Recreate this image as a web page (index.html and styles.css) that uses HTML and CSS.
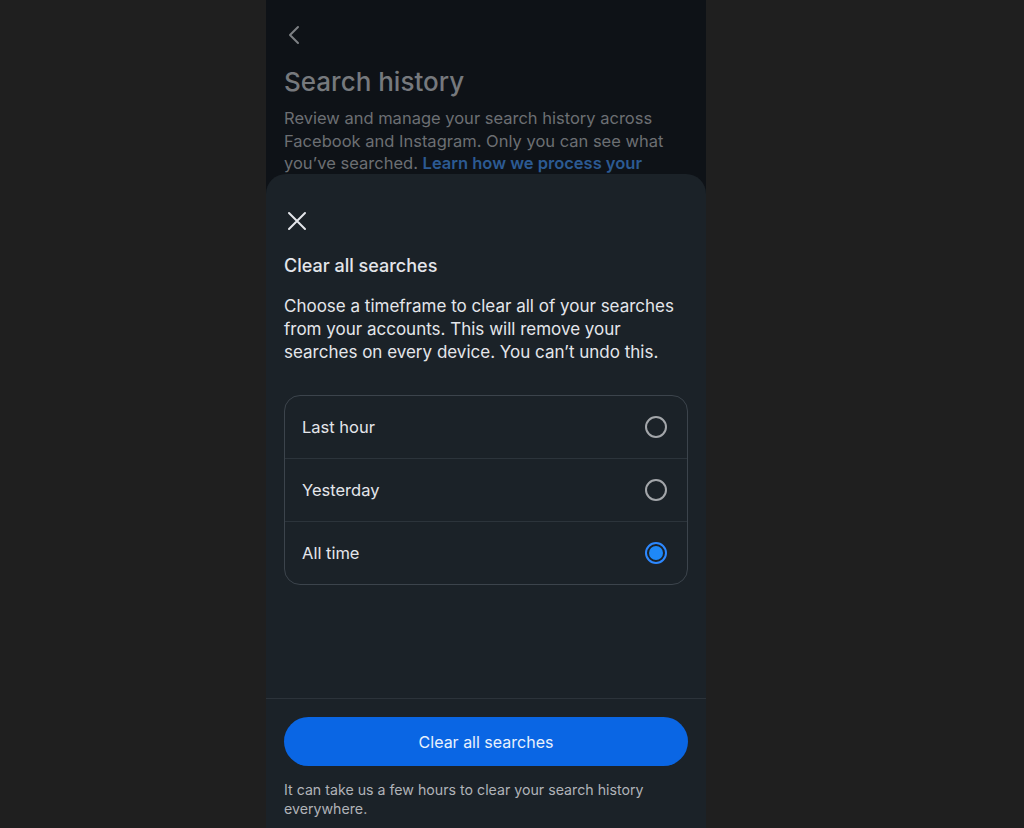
FILE: index.html
```html
<!DOCTYPE html>
<html lang="en">
<head>
<meta charset="utf-8">
<title>Clear all searches</title>
<link rel="stylesheet" href="styles.css">
</head>
<body>
<div class="phone">
  <div class="behind">
    <svg class="back" width="14" height="20" viewBox="0 0 14 20"><path d="M11 2 L3 10 L11 18" fill="none" stroke="#7d8084" stroke-width="2" stroke-linecap="round" stroke-linejoin="round"/></svg>
    <h1 class="title">Search history</h1>
    <p class="intro">Review and manage your search history across Facebook and Instagram. Only you can see what you’ve searched. <span class="link">Learn how we process your</span></p>
  </div>
  <div class="sheet">
    <div class="sheet-body">
      <svg class="close" width="20" height="20" viewBox="0 0 20 20"><path d="M2 2 L18 18 M18 2 L2 18" fill="none" stroke="#e4e6eb" stroke-width="2" stroke-linecap="round"/></svg>
      <h2 class="heading">Clear all searches</h2>
      <p class="desc">Choose a timeframe to clear all of your searches from your accounts. This will remove your searches on every device. You can’t undo this.</p>
      <div class="options">
        <div class="option"><span>Last hour</span><span class="radio"></span></div>
        <div class="option"><span>Yesterday</span><span class="radio"></span></div>
        <div class="option"><span>All time</span><span class="radio selected"></span></div>
      </div>
    </div>
    <div class="sheet-footer">
      <button class="primary">Clear all searches</button>
      <p class="note">It can take us a few hours to clear your search history everywhere.</p>
    </div>
  </div>
</div>
</body>
</html>
```

FILE: styles.css
```css
html, body {
  margin: 0;
  padding: 0;
}
body {
  background: #1f1f1f;
  font-family: Inter, "Liberation Sans", sans-serif;
  height: 828px;
  overflow: hidden;
}
.phone {
  width: 440px;
  height: 828px;
  margin-left: 266px;
  background: #0e1217;
  display: flex;
  flex-direction: column;
}
.behind {
  height: 174px;
  overflow: hidden;
  padding: 0 18px;
  box-sizing: border-box;
  flex: none;
}
.back {
  display: block;
  margin: 25px 0 0 3px;
}
.title {
  margin: 22px 0 0;
  font-size: 26px;
  line-height: 30px;
  font-weight: 500;
  color: #76797d;
}
.intro {
  margin: 10px 0 0;
  font-size: 16.5px;
  line-height: 22.5px;
  color: #6c6f73;
}
.link {
  color: #2c5a92;
  font-weight: 600;
}
.sheet {
  flex: 1;
  background: #1b2228;
  border-radius: 20px 20px 0 0;
  display: flex;
  flex-direction: column;
}
.sheet-body {
  flex: 1;
  padding: 0 18px;
}
.close {
  display: block;
  margin: 37px 0 0 3px;
}
.heading {
  margin: 23px 0 0;
  font-size: 18px;
  line-height: 24px;
  font-weight: 500;
  color: #e4e6eb;
}
.desc {
  margin: 17px 0 0;
  font-size: 17px;
  line-height: 23px;
  color: #e4e6eb;
}
.options {
  margin-top: 31px;
  border: 1px solid #3c444c;
  border-radius: 16px;
}
.option {
  height: 62px;
  padding: 0 20px 0 17px;
  display: flex;
  align-items: center;
  justify-content: space-between;
  font-size: 16.5px;
  color: #e4e6eb;
}
.option + .option {
  border-top: 1px solid #2c343b;
}
.radio {
  width: 18px;
  height: 18px;
  border: 2px solid #a3a6aa;
  border-radius: 50%;
  box-sizing: content-box;
  position: relative;
}
.radio.selected {
  border-color: #2d88ff;
}
.radio.selected::after {
  content: "";
  position: absolute;
  left: 2px;
  top: 2px;
  width: 14px;
  height: 14px;
  border-radius: 50%;
  background: #1e88f7;
}
.sheet-footer {
  flex: none;
  height: 130px;
  box-sizing: border-box;
  border-top: 1px solid #2c333a;
  padding: 18px 18px 0;
}
.primary {
  display: block;
  width: 100%;
  height: 49px;
  border: 0;
  border-radius: 25px;
  background: #0a66e4;
  color: #e9f1fc;
  font-family: Inter, "Liberation Sans", sans-serif;
  font-size: 16px;
  font-weight: 400;
}
.note {
  margin: 14px 0 0;
  font-size: 14.2px;
  line-height: 19px;
  color: #b0b3b8;
}
```
